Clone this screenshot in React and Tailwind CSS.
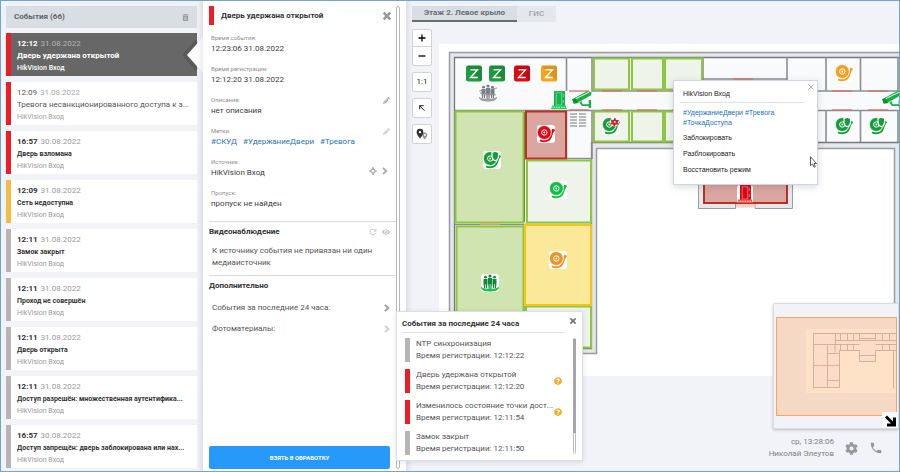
import React from "react";
import { FaTrashAlt, FaPencilAlt, FaEye, FaCog, FaQuestionCircle, FaMapMarkerAlt } from "react-icons/fa";
import { MdRefresh, MdPhone } from "react-icons/md";

const EVENTS = [
  { time: "12:12", date: "31.08.2022", title: "Дверь удержана открытой", bar: "bg-[#ee1c25]", state: "active" },
  { time: "12:09", date: "31.08.2022", title: "Тревога несанкционированного доступа к з...", bar: "bg-[#ee1c25]", state: "read" },
  { time: "16:57", date: "30.08.2022", title: "Дверь взломана", bar: "bg-[#ee1c25]" },
  { time: "12:09", date: "31.08.2022", title: "Сеть недоступна", bar: "bg-[#f3bc45]" },
  { time: "12:11", date: "31.08.2022", title: "Замок закрыт", bar: "bg-[#b5b5b5]" },
  { time: "12:11", date: "31.08.2022", title: "Проход не совершён", bar: "bg-[#b5b5b5]" },
  { time: "12:11", date: "31.08.2022", title: "Дверь открыта", bar: "bg-[#b5b5b5]" },
  { time: "12:11", date: "31.08.2022", title: "Доступ разрешён: множественная аутентифика...", bar: "bg-[#b5b5b5]" },
  { time: "16:57", date: "30.08.2022", title: "Доступ запрещён: дверь заблокирована или нах...", bar: "bg-[#b5b5b5]" },
];

const CARD = {
  active: { box: "bg-[#676767]", time: "font-bold text-white", date: "text-[#b4b4b4]", title: "text-[8px] font-bold text-white", source: "font-medium text-white" },
  read: { box: "bg-white", time: "text-[#555]", date: "text-[#a5a5a5]", title: "text-[8px] text-[#555]", source: "text-[#a0a0a0]" },
  fresh: { box: "bg-white", time: "font-bold text-[#333]", date: "text-[#999]", title: "text-[7px] font-bold text-[#333]", source: "text-[#999]" },
};

function Cross({ size, width = 2.4 }) {
  return (
    <svg width={size} height={size} viewBox="0 0 9 9"><path d="M1.500 1.500l6 6M7.500 1.500l-6 6" stroke="currentColor" strokeWidth={width} /></svg>
  );
}

function Chevron({ className = "" }) {
  return (
    <svg width="6" height="8" viewBox="0 0 6 8" className={className}><path d="M1 .8L4.400 4L1 7.200" fill="none" stroke="currentColor" strokeWidth="1.800" /></svg>
  );
}

function EventCard({ event }) {
  const s = CARD[event.state || "fresh"];
  return (
    <li className={`relative flex h-[43px] ${s.box}`}>
      <span className={`w-[5px] shrink-0 ${event.bar}`} />
      <div className="min-w-0 flex-1 pt-[5px] pl-1.5 leading-[12px] whitespace-nowrap">
        <p className="h-3 text-[8px]">
          <span className={s.time}>{event.time}</span> <span className={`pl-px ${s.date}`}>{event.date}</span>
        </p>
        <p className={`h-3 ${s.title}`}>{event.title}</p>
        <p className={`h-3 text-[7px] ${s.source}`}>HikVision Вход</p>
      </div>
      {event.state === "active" && (
        <svg className="absolute top-0.5 -right-1.5 h-10 w-5" viewBox="0 0 20 40">
          <path d="M14 6 L2 20 L14 35" fill="none" stroke="#000" strokeOpacity=".12" strokeWidth="4" />
          <path d="M20 2 L4 20 L20 38Z" fill="#fff" />
        </svg>
      )}
    </li>
  );
}

function EventList() {
  return (
    <aside className="w-[202px] shrink-0 pt-[5px] pr-1.5 pl-[5px]">
      <header className="mb-[5px] flex h-[22px] items-center justify-between bg-[#d9dee2] px-2 text-[#5d646b]">
        <h2 className="text-[8px] font-bold">События (66)</h2>
        <button aria-label="Очистить" className="text-[#999]"><FaTrashAlt size={7} /></button>
      </header>
      <ul className="flex flex-col gap-1.5">
        {EVENTS.map((e, i) => <EventCard key={i} event={e} />)}
      </ul>
    </aside>
  );
}

function Field({ label, children, actions }) {
  return (
    <div className="flex h-[31px] justify-between">
      <dl>
        <dt className="text-[6px] leading-[10px] text-[#8d8d8d]">{label}</dt>
        <dd className="text-[8px] leading-[12px] text-[#3d3d3d]">{children}</dd>
      </dl>
      <div className="flex text-[#aaa]">{actions}</div>
    </div>
  );
}

function Tag({ children }) {
  return <a href="#tag" className="mr-1.5 text-[#2a72b5]">{children}</a>;
}

function Details() {
  return (
    <section className="relative flex w-[203px] shrink-0 bg-white shadow-[0_0_5px_2px_rgba(60,70,90,0.14)]">
      <div className="flex min-w-0 flex-1 flex-col pt-[5px] pl-1.5">
        <header className="mb-2 flex h-[19px] items-center justify-between pr-1">
          <div className="flex h-full items-center gap-[7px]">
            <span className="h-full w-[5px] bg-[#ee1c25]" />
            <h2 className="text-[8px] font-bold text-[#333]">Дверь удержана открытой</h2>
          </div>
          <button aria-label="Закрыть" className="text-[#999]"><Cross size="10" /></button>
        </header>
        <div className="pr-1 pb-[2px] pl-0.5">
          <Field label="Время события:">12:23:06 31.08.2022</Field>
          <Field label="Время регистрации:">12:12:20 31.08.2022</Field>
          <Field label="Описание:" actions={<button aria-label="Изменить описание" className="h-[10px] pr-0.5"><FaPencilAlt size={7} /></button>}>нет описания</Field>
          <Field label="Метки:" actions={<button aria-label="Изменить метки" className="h-[10px] pr-0.5 text-[#ccc]"><FaPencilAlt size={7} /></button>}>
            <Tag>#СКУД</Tag><Tag>#УдержаниеДвери</Tag><Tag>#Тревога</Tag>
          </Field>
          <Field
            label="Источник:"
            actions={
              <div className="mt-1 flex h-5 items-center gap-[5px] pr-1">
                <button aria-label="Показать на плане">
                  <svg width="8" height="8" viewBox="0 0 8 8"><path d="M4 1.300L6.700 4L4 6.700L1.300 4z" fill="none" stroke="currentColor" strokeWidth="1.100" /><path d="M4 0v2.500M4 5.500V8M0 4h2.500M5.500 4H8" stroke="currentColor" strokeWidth="1.200" /></svg>
                </button>
                <button aria-label="Открыть источник"><Chevron /></button>
              </div>
            }
          >HikVision Вход</Field>
          <Field label="Пропуск:">пропуск не найден</Field>
        </div>
        <section className="border-t border-[#d8dadd] pt-1">
          <div className="flex h-3 items-center justify-between pr-1.5 text-[#c4c4c4]">
            <h3 className="text-[8px] font-bold text-[#333]">Видеонаблюдение</h3>
            <div className="flex items-center gap-1">
              <button aria-label="Обновить"><MdRefresh size={10} /></button>
              <button aria-label="Просмотр"><FaEye size={8} /></button>
            </div>
          </div>
          <p className="mt-[7px] mb-[6px] h-6 w-[170px] pl-[3px] text-[8px] leading-[12px] text-[#555]">
            К источнику события не привязан ни один медиаисточник
          </p>
        </section>
        <section className="flex flex-1 flex-col border-t border-[#d8dadd] pt-1">
          <h3 className="text-[8px] leading-[12px] font-bold text-[#333]">Дополнительно</h3>
          <button className="mt-[5px] flex h-[21px] items-center justify-between pr-1.5 pl-[3px] text-[8px] text-[#555]">
            События за последние 24 часа:<Chevron className="text-[#999]" />
          </button>
          <button className="flex h-[21px] items-center justify-between pr-1.5 pl-[3px] text-[8px] text-[#555]">
            Фотоматериалы:<Chevron className="text-[#ccc]" />
          </button>
        </section>
        <button className="mr-1.5 mb-[2px] h-[23px] rounded-xs bg-[#2699fb] text-[6px] font-bold text-white">ВЗЯТЬ В ОБРАБОТКУ</button>
      </div>
      <div className="mr-[6px] flex w-1 pt-[5px] pb-0.5">
        <span className="w-full rounded-t-xs rounded-b-xs border border-[#b9b9b9] bg-white" />
      </div>
    </section>
  );
}

function Bell({ x, y, color, badge }) {
  return (
    <g transform={`translate(${x - 9} ${y - 9})`}>
      <rect width="18" height="18" rx="3" fill="#fff" />
      <path d="M3 15.300C7.500 17.500 12.500 16 14 11.500C14.700 9 15 7.200 16.300 6" fill="none" stroke={color} strokeWidth="2" />
      <circle cx="16.200" cy="5.300" r="1.500" fill={color} />
      <circle cx="7.300" cy="7.500" r="7" fill={color} stroke="#fff" strokeWidth=".8" />
      <circle cx="7.300" cy="7.500" r="2.700" fill="none" stroke="#fff" strokeWidth="1" />
      <circle cx="7.300" cy="7.500" r=".9" fill="#fff" />
      {badge === "shield" && <path d="M9 1.500l3.300-1.300 3.300 1.300v3.500c0 2.300-1.300 3.900-3.300 4.800-2-.9-3.300-2.500-3.300-4.800z" fill={color} stroke="#fff" strokeWidth="1.200" />}
      {badge === "alarm" && (
        <g><circle cx="12.500" cy="4.800" r="4.600" fill="#fff" /><path d="M8.500 2.500l2.800.5L13 .3l1.200 2.600 3 .2-1.500 2.200 1.300 2.300-3.300.2-1.500 2-1.300-2.400-2.900-.3 1.500-1.800z" fill="#d8202b" /><circle cx="12.700" cy="5" r="1" fill="#fff" /></g>
      )}
    </g>
  );
}

function People({ x, y, color, ring, tile }) {
  return (
    <g transform={`translate(${x - 9} ${y - 9})`}>
      {tile && <rect width="18" height="18" rx="3" fill="#fff" />}
      <g fill={color}>
        <circle cx="4.500" cy="3.200" r="1.400" /><circle cx="9" cy="2" r="1.600" /><circle cx="13.500" cy="3.200" r="1.400" />
        <path d="M2.500 5h4v4.500l-.6 4.500h-1v-4h-.6l-.2 4h-1l-.6-4.500zM7 4h4v5l-.6 6h-1v-5h-.7v5h-1L7 9zM11.500 5h4v4.500l-.6 4.500h-1v-4h-.6l-.2 4h-1l-.6-4.500z" />
      </g>
      <path d="M0 12.500c-.5 4 4.500 5 9 5s9.500-1 9-5c-1.500 3-16.500 3.200-18 0z" fill={ring} />
      {!tile && <path d="M0 7l18-3M1 9l16 2" stroke="#8b8f94" strokeWidth=".9" fill="none" />}
    </g>
  );
}

function Door({ x, y, color, base }) {
  return (
    <g transform={`translate(${x - 8} ${y - 9})`}>
      <rect width="16" height="18" rx="3" fill="#fff" />
      <path d="M3 0h11v15H3z" fill={color} />
      <path d="M5.300 1.800h5.400v12.200h-5.400zM12.300 3v3M12.300 9v3" fill="none" stroke="#fff" strokeOpacity=".55" strokeWidth=".7" />
      <path d="M1 14.500h14l1 3.500H0z" fill={base} />
      <path d="M0 16.300h16" stroke="#fff" strokeWidth=".7" strokeDasharray="1.500 1" />
    </g>
  );
}

function Camera({ x, y }) {
  return (
    <g transform={`translate(${x - 10} ${y - 8})`}>
      <path d="M1.500 7.500L15.500 0l4 1.200-.5 3L6 11.500l-4-.5z" fill="#16b13e" />
      <path d="M3.500 7.800L17 1.200" stroke="#fff" strokeWidth=".9" />
      <path d="M0 8l3.500-.5 3 4.500-4.800.8z" fill="#0f8f31" />
      <path d="M9.500 10l1 3.300h6.200V9H19v8h-2.300v-2H9.800L7.500 11.500z" fill="#16b13e" />
    </g>
  );
}

const ZONES = [[466, "#1f9a41"], [489, "#1f9a41"], [514, "#dd0a12"], [541, "#f5a61d"]];
const GREEN_ROOMS = [[593, 58, 36, 32], [631, 58, 32, 32], [664, 58, 38, 32], [593, 111, 36, 31], [631, 111, 32, 31], [664, 111, 38, 31], [526, 160, 65, 63], [525, 306, 66, 42]];
const DOORS = [[602, 91], [637, 91], [672, 91], [793, 91], [832, 91], [868, 91], [602, 110], [637, 110], [672, 110], [793, 110], [832, 110], [868, 110], [569, 91], [569, 110], [733, 79], [480, 224]];

function FloorPlan() {
  return (
    <svg className="block h-[332px] w-full bg-white" viewBox="439 44 460 332" preserveAspectRatio="xMinYMin slice" role="img" aria-label="План этажа">
      <path d="M449.500 353.500V52.500H910V400H894.500V148.500H596.500V353.500Z" fill="#e4e7ec" stroke="#999da3" strokeWidth="1.500" />
      <path d="M698.500 143V208.500H735.500V204H755V208.500H792.500V143" fill="#e4e7ec" stroke="#999da3" />
      <path d="M454.500 348.500V57.500H910V142.500H591.500V348.500Z" fill="#f9fafc" stroke="#77797d" strokeWidth="1.300" />
      <path d="M455 110.500H593M566.500 57V91M566.500 110V158.500H592M592 57V91H703M592 110V159M455 224.500H592M525 224V348M593 110.500H899M787 57V91M787 91H899M826 57V91M826 110V142M860.500 57V91M860.500 110V142M898 57V91M898 110V142M703 57V91M787 110V142M703 79H787" fill="none" stroke="#8b8e93" strokeWidth="1.600" />
      <g stroke="#8ec63f" strokeWidth="2">
        {GREEN_ROOMS.map(([x, y, w, h]) => <rect key={`${x}-${y}`} x={x + 1} y={y + .5} width={w - 1} height={h - 1} fill="#eef4ea" />)}
        <rect x="455.500" y="111.500" width="68" height="111" fill="#cfe4b0" />
        <rect x="456.500" y="226.500" width="67" height="122" fill="#cfe4b0" />
      </g>
      <path d="M524.500 112V222" stroke="#6d9340" />
      <rect x="526" y="111.500" width="40" height="47" fill="#dba69f" stroke="#bb3124" strokeWidth="2" />
      <rect x="525" y="225" width="66" height="80" fill="#fbe898" stroke="#f4c416" strokeWidth="2" />
      <rect x="704" y="150" width="83" height="53" fill="#dba69f" stroke="#b83026" strokeWidth="2" />
      <path d="M736 206H755" stroke="#f3cfc6" strokeWidth="3" />
      {DOORS.map(([x, y]) => <path key={`${x}-${y}`} d={`M${x} ${y}h20`} stroke={y === 224 ? "#e8a77f" : "#cf7469"} strokeWidth="1.300" />)}
      {[114, 117, 120, 123, 126].map((y) => <path key={y} d={`M570 ${y}h7M579 ${y}h7`} stroke="#777" strokeWidth="1.200" />)}
      {ZONES.map(([x, c]) => (
        <g key={x}>
          <rect x={x} y="65.500" width="16" height="16" rx="2.500" fill={c} />
          <path d="M0 0h16v16z" transform={`translate(${x} 65.500)`} fill="#000" opacity=".1" />
          <path d={`M${x + 4.5} 69.800h7l-7 7.700h7.200`} fill="none" stroke="#fff" strokeWidth="1.300" />
        </g>
      ))}
      <People x={488} y={93} color="#777c82" ring="#9a9ea3" />
      <Door x={559} y={100} color="#16b54a" base="#1fd45d" />
      <Camera x={582} y={99} />
      <Camera x={892} y={99} />
      <Bell x={546} y={134} color="#e30613" />
      <Bell x={492} y={160} color="#179c3c" badge="shield" />
      <Bell x={558} y={190} color="#0fc043" />
      <Bell x={558} y={260} color="#e8952a" />
      <People x={490} y={283} color="#0b8b38" ring="#19c34c" tile />
      <Bell x={611} y={126} color="#179c3c" badge="alarm" />
      <Bell x={844} y={73} color="#f0a020" />
      <Bell x={844} y={126} color="#179c3c" badge="shield" />
      <Bell x={878} y={126} color="#179c3c" badge="shield" />
      <Door x={745} y={194} color="#e30613" base="#e05a50" />
    </svg>
  );
}

const TOOL = "flex w-[20px] items-center justify-center rounded-xs border border-[#cfd2d6] bg-white text-[#222]";

function Toolbar() {
  return (
    <div className="flex w-[33px] shrink-0 flex-col gap-1.5 pt-[7px] pl-1.5">
      <div className="w-5 rounded-xs border border-[#cfd2d6] bg-white text-black">
        <button aria-label="Приблизить" className="flex h-[17px] w-full items-center justify-center border-b border-[#cfd2d6]">
          <svg width="8" height="8"><path d="M4 .5v7M.5 4h7" stroke="currentColor" strokeWidth="1.300" /></svg>
        </button>
        <button aria-label="Отдалить" className="flex h-[18px] w-full items-center justify-center">
          <svg width="8" height="8"><path d="M.5 4h7" stroke="currentColor" strokeWidth="1.300" /></svg>
        </button>
      </div>
      <button className={`h-5 text-[8px] ${TOOL}`}>1:1</button>
      <button aria-label="Свернуть" className={`h-5 ${TOOL}`}>
        <svg width="6" height="6" viewBox="0 0 6 6"><path d="M.7 4.300V.7h4M.7 .7l4.800 5" fill="none" stroke="currentColor" strokeWidth="1" /></svg>
      </button>
      <button aria-label="Метки" className={`h-5 ${TOOL}`}>
        <svg width="12" height="12" viewBox="0 0 12 12">
          <path d="M8.700 11.500C7 9.500 6.200 8.300 6.200 7a2.500 2.500 0 0 1 5 0c0 1.300-.8 2.500-2.500 4.500z" fill="#999" />
          <path d="M4 10.500C1.800 7.800.6 6 .6 4.200a3.400 3.400 0 0 1 6.800 0C7.400 6 6.200 7.800 4 10.500z" fill="#333" />
          <circle cx="4" cy="4.100" r="1.200" fill="#fff" /><circle cx="8.800" cy="7" r=".9" fill="#fff" />
        </svg>
      </button>
    </div>
  );
}

function DevicePopup() {
  return (
    <div className="absolute top-[79px] left-[267px] z-10 w-[145px] border border-[#cfd6df] bg-white pt-2 pr-3 pb-1.5 pl-[9px] font-['Liberation_Sans',sans-serif] text-[7px] text-[#222] shadow-[0_2px_7px_rgba(40,60,90,0.18)]">
      <button aria-label="Закрыть" className="absolute top-[2px] right-0.5 text-[#aaa]"><Cross size="8" width={1} /></button>
      <h3 className="-ml-[3px] h-[14px] border-b border-[#dfe2e5] pl-[3px] leading-[10px]">HikVision Вход</h3>
      <p className="mt-[5px] leading-[10px] text-[#1a6fb8]">
        <a href="#door">#УдержаниеДвери</a> <a href="#alarm">#Тревога</a><br />
        <a href="#point">#ТочкаДоступа</a>
      </p>
      <div className="mt-0.5 flex flex-col items-start">
        {["Заблокировать", "Разблокировать", "Восстановить режим"].map((t) => <button key={t} className="h-4">{t}</button>)}
      </div>
      <svg className="absolute right-0 bottom-4 h-3 w-2" viewBox="0 0 8 12">
        <path d="M1.500 .7v9l2-1.700 1.500 3.200 1.300-.6L5 7.500h2.500z" fill="#fff" stroke="#333" strokeWidth=".8" />
      </svg>
    </div>
  );
}

const RECENT = [
  ["NTP синхронизация", "12:12:22", false],
  ["Дверь удержана открытой", "12:12:20", true],
  ["Изменилось состояние точки дост...", "12:11:54", true],
  ["Замок закрыт", "12:11:50", false],
];

function RecentEvents() {
  return (
    <section className="absolute top-[310px] -left-[10px] z-20 h-[150px] w-[187px] border border-[#dce0e5] bg-white pt-[5px] pl-[5px] shadow-[0_1px_5px_rgba(40,60,90,0.15)]">
      <h3 className="mr-[17px] h-4 border-b border-[#dfe2e5] text-[8px] leading-[14px] font-bold text-[#333]">События за последние 24 часа</h3>
      <button aria-label="Закрыть" className="absolute top-[5px] right-[5px] text-[#777]"><Cross size="8" width={2} /></button>
      <div className="flex justify-between pt-[5px] pr-1.5">
        <ul className="flex flex-col gap-[7px] pl-[3px]">
          {RECENT.map(([title, time, alarm]) => (
            <li key={title} className="flex h-6 items-center">
              <span className={`h-full w-[5px] ${alarm ? "bg-[#ee1c25]" : "bg-[#b5b5b5]"}`} />
              <div className="w-[144px] pl-1.5 text-[8px] leading-[12px] whitespace-nowrap text-[#555]">
                <p>{title}</p>
                <p>Время регистрации: {time}</p>
              </div>
              {alarm && <FaQuestionCircle size={8} className="text-[#f6a821]" />}
            </li>
          ))}
        </ul>
        <div className="h-[116px] w-[3px] rounded-full border border-[#bbb]"><span className="-mx-px block h-[94px] w-[3px] bg-[#a5a5a5]" /></div>
      </div>
    </section>
  );
}

function MiniMap() {
  return (
    <div className="absolute right-0 bottom-[42px] h-[126px] w-[126px] rounded-xs border border-[#d9dce1] bg-[#f2f3f8] shadow-[0_1px_3px_rgba(40,50,70,0.3)]">
      <svg className="block h-full w-full" viewBox="0 0 124 124">
        <rect x="2.500" y="13.500" width="120" height="98" fill="#f5d9c4" stroke="#f6a75c" />
        <path d="M32 25H122V89H32z" fill="#fee2c8" />
        <path d="M39.500 30H122V46H102V58H85V46H66V84H39.500z" fill="#fadcc8" />
        <g fill="none" stroke="#d5af9a">
          <path d="M39.500 84.500V29.500H122M122 36.500H62M122 40.500H101.500M85.500 40.500H61V48.500M122 46.500H101.500V57.500H85.500V46.500H65.500V83.500H39.500M39.500 40.500H61M53.500 40V84M53.500 49.500H65M39.500 61.500H65.500M53.500 76.500H65.500M61.500 30V41M66.500 30V36M73.500 30V36M79.500 30V36M85.500 30V36M101.500 30V36M108.500 30V36M115.500 30V36M66.500 41V47M73.500 41V47M79.500 41V47M108.500 41V47M115.500 41V47M85.500 51.500H101.500M119.500 47V84.500" />
          <path d="M86 34.500h15" />
        </g>
        <path d="M44 61.500h5M57 61.500h5" stroke="#f7a98a" />
        <rect x="108" y="108" width="16" height="16" fill="#f7f8fb" />
        <path d="M113 111.500l6 6v-4h3v9h-9v-3h4l-6-6z" fill="#000" />
      </svg>
    </div>
  );
}

function MapView() {
  return (
    <main className="relative flex min-w-0 flex-1 flex-col">
      <nav className="mt-[5px] flex h-4 pl-1.5 text-[8px] font-bold">
        <button className="w-[105px] border-b-2 border-[#6b6b6b] bg-[#d9dee2] text-[#6a6f74]">Этаж 2. Левое крыло</button>
        <button className="w-[39px] bg-[#e4e8eb] text-[#a9adb1]">ГИС</button>
      </nav>
      <div className="flex flex-1">
        <Toolbar />
        <div className="min-w-0 flex-1 pt-[22px]"><FloorPlan /></div>
      </div>
      <footer className="flex h-[42px] items-center justify-end gap-[11px] pr-4 pb-1 text-[#999]">
        <p className="text-right text-[8px] leading-[12px] text-[#808080]">ср, 13:28:06<br />Николай Элеутов</p>
        <button aria-label="Настройки"><FaCog size={13} /></button>
        <button aria-label="Телефон"><MdPhone size={14} /></button>
      </footer>
      <MiniMap />
      <DevicePopup />
      <RecentEvents />
    </main>
  );
}

export default function App() {
  return (
    <div className="flex min-h-screen overflow-hidden border border-[#75a3d1] bg-[#f2f3f8] font-['Roboto',sans-serif]">
      <EventList />
      <Details />
      <MapView />
    </div>
  );
}
